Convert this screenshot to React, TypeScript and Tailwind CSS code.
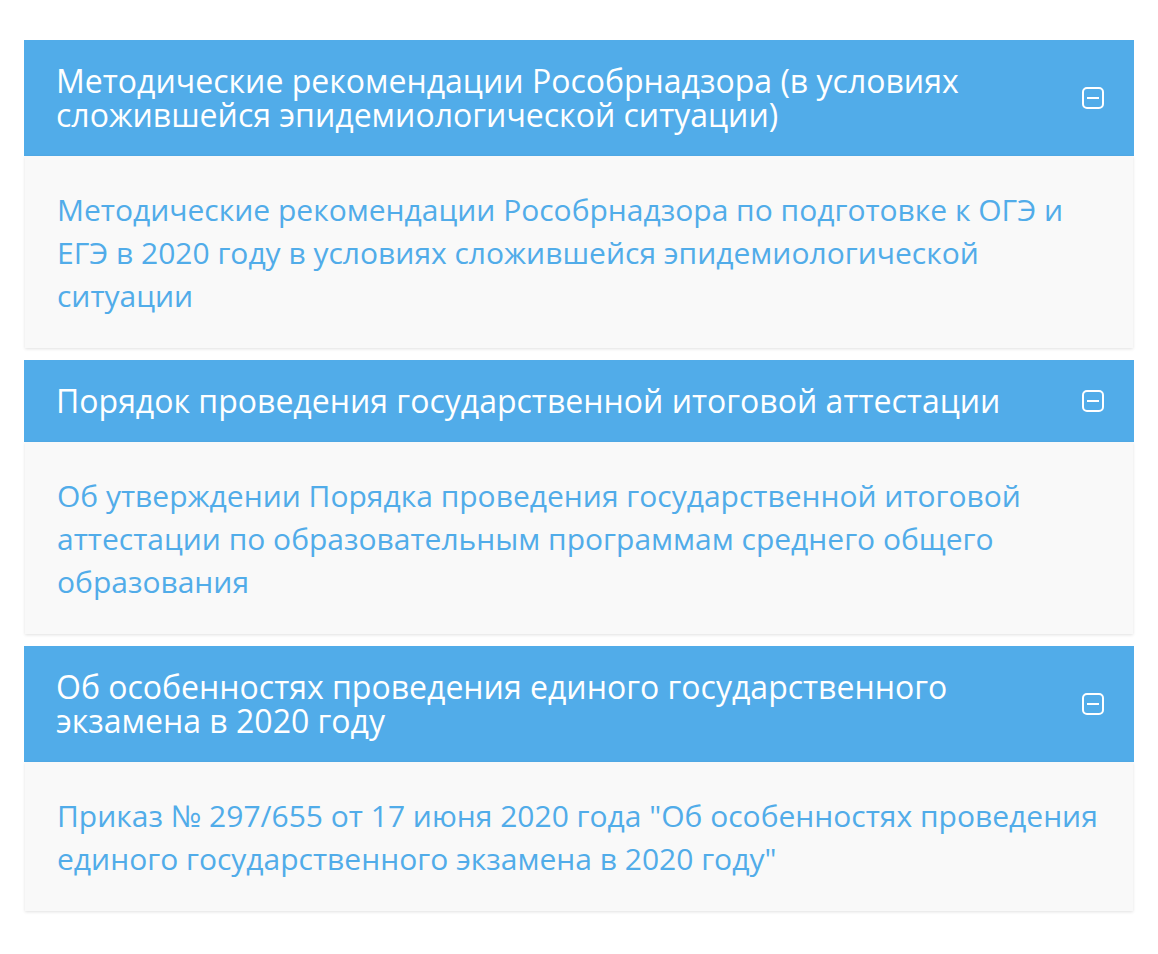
const items = [
  {
    title: 'Методические рекомендации Рособрнадзора (в условиях сложившейся эпидемиологической ситуации)',
    text: 'Методические рекомендации Рособрнадзора по подготовке к ОГЭ и ЕГЭ в 2020 году в условиях сложившейся эпидемиологической ситуации',
  },
  {
    title: 'Порядок проведения государственной итоговой аттестации',
    text: 'Об утверждении Порядка проведения государственной итоговой аттестации по образовательным программам среднего общего образования',
  },
  {
    title: 'Об особенностях проведения единого государственного экзамена в 2020 году',
    text: 'Приказ № 297/655 от 17 июня 2020 года "Об особенностях проведения единого государственного экзамена в 2020 году"',
  },
];

function MinusBox() {
  return (
    <svg width="22" height="22" viewBox="0 0 22 22" fill="none" className="shrink-0">
      <rect x="1" y="1" width="20" height="20" rx="4" stroke="white" strokeWidth="2" />
      <path d="M5 11h12" stroke="white" strokeWidth="2" />
    </svg>
  );
}

export default function App() {
  return (
    <div className="min-h-[954px] bg-white px-6 pt-10 font-['Open_Sans',sans-serif]">
      <div className="flex flex-col gap-3">
        {items.map((item) => (
          <div key={item.title}>
            <div className="flex items-center gap-4 bg-[#51ace9] py-6 pl-8 pr-[30px]">
              <h3 className="flex-1 text-[32px] leading-[34px] font-normal text-white">
                {item.title}
              </h3>
              <MinusBox />
            </div>
            <div className="mx-[1px] bg-[#f9f9f9] px-8 pt-8 pb-[31px] shadow-[0_1px_3px_rgba(0,0,0,0.12)]">
              <a href="#" className="text-[30px] leading-[43px] text-[#51ace9]">
                {item.text}
              </a>
            </div>
          </div>
        ))}
      </div>
    </div>
  );
}
